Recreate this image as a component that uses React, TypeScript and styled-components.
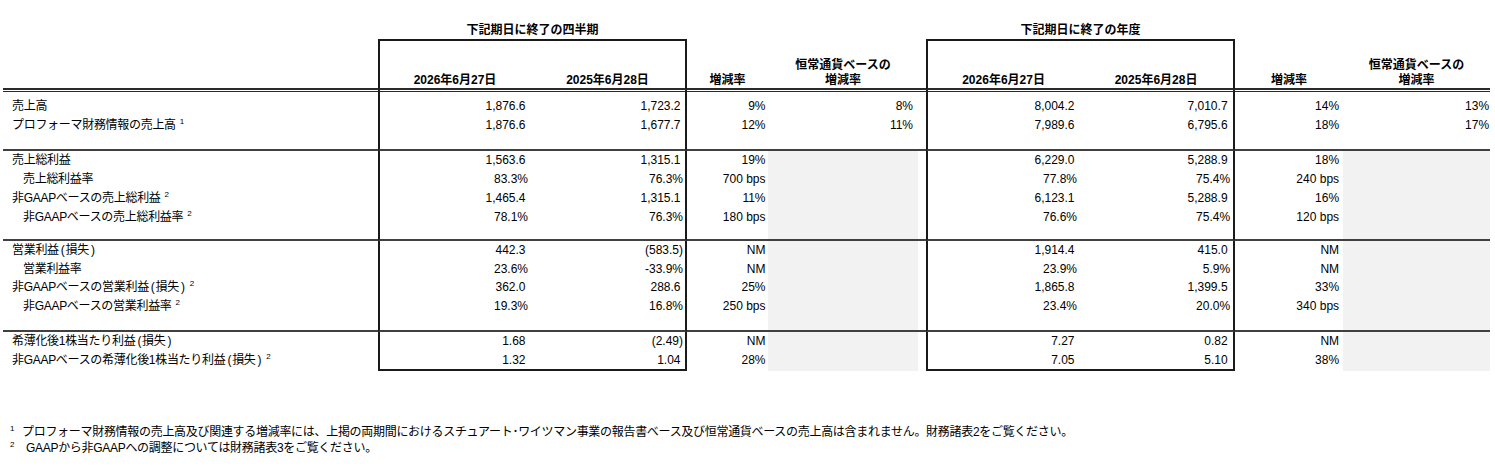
import React from 'react'
import styled, { createGlobalStyle, css } from 'styled-components'

type ColKey = 'label' | 'q1' | 'q2' | 'chg' | 'cc' | 'gap' | 'y1' | 'y2' | 'chg2' | 'cc2'
type Edge = 'none' | 'head' | 'thin' | 'rule' | 'box'

interface IRow {
  label: string
  loss?: boolean
  sup?: string
  indent?: boolean
  values: string[]
}

const COLS: { key: ColKey; width: number; pr: number }[] = [
  { key: 'label', width: 375, pr: 0 },
  { key: 'q1', width: 152, pr: 2 },
  { key: 'q2', width: 157, pr: 2 },
  { key: 'chg', width: 81, pr: 2.5 },
  { key: 'cc', width: 150, pr: 5 },
  { key: 'gap', width: 8, pr: 0 },
  { key: 'y1', width: 153, pr: 2 },
  { key: 'y2', width: 156, pr: 3 },
  { key: 'chg2', width: 108, pr: 4 },
  { key: 'cc2', width: 147, pr: 1 },
]

const BOX_LEFT: ColKey[] = ['q1', 'y1']
const BOX_RIGHT: ColKey[] = ['q2', 'y2']
const BOX: ColKey[] = ['q1', 'q2', 'y1', 'y2']
const SHADED: ColKey[] = ['cc', 'cc2']

const SECTIONS: IRow[][] = [
  [
    { label: '売上高', values: ['1,876.6', '1,723.2', '9%', '8%', '8,004.2', '7,010.7', '14%', '13%'] },
    {
      label: 'プロフォーマ財務情報の売上高',
      sup: '1',
      values: ['1,876.6', '1,677.7', '12%', '11%', '7,989.6', '6,795.6', '18%', '17%'],
    },
  ],
  [
    { label: '売上総利益', values: ['1,563.6', '1,315.1', '19%', '', '6,229.0', '5,288.9', '18%', ''] },
    { label: '売上総利益率', indent: true, values: ['83.3%', '76.3%', '700 bps', '', '77.8%', '75.4%', '240 bps', ''] },
    {
      label: '非GAAPベースの売上総利益',
      sup: '2',
      values: ['1,465.4', '1,315.1', '11%', '', '6,123.1', '5,288.9', '16%', ''],
    },
    {
      label: '非GAAPベースの売上総利益率',
      sup: '2',
      indent: true,
      values: ['78.1%', '76.3%', '180 bps', '', '76.6%', '75.4%', '120 bps', ''],
    },
  ],
  [
    { label: '営業利益', loss: true, values: ['442.3', '(583.5)', 'NM', '', '1,914.4', '415.0', 'NM', ''] },
    { label: '営業利益率', indent: true, values: ['23.6%', '-33.9%', 'NM', '', '23.9%', '5.9%', 'NM', ''] },
    {
      label: '非GAAPベースの営業利益',
      loss: true,
      sup: '2',
      values: ['362.0', '288.6', '25%', '', '1,865.8', '1,399.5', '33%', ''],
    },
    {
      label: '非GAAPベースの営業利益率',
      sup: '2',
      indent: true,
      values: ['19.3%', '16.8%', '250 bps', '', '23.4%', '20.0%', '340 bps', ''],
    },
  ],
  [
    { label: '希薄化後1株当たり利益', loss: true, values: ['1.68', '(2.49)', 'NM', '', '7.27', '0.82', 'NM', ''] },
    {
      label: '非GAAPベースの希薄化後1株当たり利益',
      loss: true,
      sup: '2',
      values: ['1.32', '1.04', '28%', '', '7.05', '5.10', '38%', ''],
    },
  ],
]

// spacer above each section: height and whether it ends with a separator line
const GAPS = [
  { h: 5, rule: false, shade: false },
  { h: 16.5, rule: true, shade: false },
  { h: 14.5, rule: true, shade: true },
  { h: 16.25, rule: true, shade: true },
]

const HEADERS: Record<ColKey, React.ReactNode> = {
  label: '',
  q1: '2026年6月27日',
  q2: '2025年6月28日',
  chg: '増減率',
  cc: (
    <>
      恒常通貨ベースの
      <br />
      増減率
    </>
  ),
  gap: '',
  y1: '2026年6月27日',
  y2: '2025年6月28日',
  chg2: '増減率',
  cc2: (
    <>
      恒常通貨ベースの
      <br />
      増減率
    </>
  ),
}

const App = () => {
  const cells = (opts: {
    top?: Edge
    bottom?: Edge
    shade?: boolean
    content?: (col: ColKey) => React.ReactNode
    head?: boolean
  }) =>
    COLS.map((c) => (
      <Cell
        key={c.key}
        $col={c.key}
        $pr={opts.head ? 0 : c.pr}
        $top={opts.top || 'none'}
        $bottom={opts.bottom || 'none'}
        $shade={!!opts.shade && SHADED.includes(c.key)}
        $head={!!opts.head}
      >
        {opts.content ? opts.content(c.key) : null}
      </Cell>
    ))

  return (
    <>
      <GlobalStyle />
      <Page>
        <Table>
          <colgroup>
            {COLS.map((c) => (
              <col key={c.key} style={{ width: c.width }} />
            ))}
          </colgroup>
          <tbody>
            <Row $h={39}>
              <td colSpan={1} />
              <GroupTitle colSpan={2}>下記期日に終了の四半期</GroupTitle>
              <td colSpan={3} />
              <GroupTitle colSpan={2}>下記期日に終了の年度</GroupTitle>
              <td colSpan={2} />
            </Row>
            <Row $h={51}>{cells({ top: 'box', bottom: 'head', head: true, content: (k) => HEADERS[k] })}</Row>
            <Row $h={2}>{cells({ bottom: 'thin' })}</Row>

            {SECTIONS.map((section, si) => (
              <React.Fragment key={si}>
                <Row $h={GAPS[si].h}>
                  {cells({ bottom: GAPS[si].rule ? 'rule' : 'none', shade: GAPS[si].shade })}
                </Row>
                {section.map((row, ri) => {
                  const last = si === SECTIONS.length - 1 && ri === section.length - 1
                  return (
                    <Row key={ri} $h={last ? 20.75 : 18.75}>
                      {cells({
                        shade: si > 0,
                        bottom: last ? 'box' : 'none',
                        content: (k) => {
                          if (k === 'label') {
                            return (
                              <Label $indent={!!row.indent}>
                                {row.label}
                                {row.loss ? (
                                  <>
                                    <Paren>(</Paren>損失<Paren>)</Paren>
                                  </>
                                ) : null}
                                {row.sup ? <Sup>{row.sup}</Sup> : null}
                              </Label>
                            )
                          }
                          if (k === 'gap') return null
                          const idx = COLS.findIndex((c) => c.key === k) - 1
                          const v = row.values[idx > 4 ? idx - 1 : idx]
                          return <Val $trail={/\d$/.test(v)}>{v}</Val>
                        },
                      })}
                    </Row>
                  )
                })}
              </React.Fragment>
            ))}
          </tbody>
        </Table>

        <Notes>
          <Note>
            <Mark>1</Mark>
            <span>
              プロフォーマ財務情報の売上高及び関連する増減率には、上掲の両期間におけるスチュアート･ワイツマン事業の報告書ベース及び恒常通貨ベースの売上高は含まれません。財務諸表2をご覧ください。
            </span>
          </Note>
          <Note>
            <Mark>2</Mark>
            <NoteText $lead={4}>GAAPから非GAAPへの調整については財務諸表3をご覧ください。</NoteText>
          </Note>
        </Notes>
      </Page>
    </>
  )
}

export default App

const GlobalStyle = createGlobalStyle`
  html, body {
    margin: 0;
    padding: 0;
    background: #ffffff;
  }

  body {
    font-family: 'Liberation Sans', 'Noto Sans CJK JP', sans-serif;
    font-size: 12px;
    color: #000000;
  }
`

const Page = styled.div`
  width: 1487px;
  padding-left: 3px;
`

const Table = styled.table`
  table-layout: fixed;
  width: 1487px;
  border-collapse: separate;
  border-spacing: 0;
  font-size: 12px;
`

const Row = styled.tr<{ $h: number }>`
  height: ${(p) => p.$h}px;
`

const GroupTitle = styled.td`
  padding: 0 0 2px;
  vertical-align: bottom;
  text-align: center;
  font-weight: bold;
  line-height: 14px;
`

const edge = (e: Edge, col: ColKey) => {
  switch (e) {
    case 'head':
      return '2px solid #2a2a2a'
    case 'thin':
      return '1px solid #2a2a2a'
    case 'rule':
      return '2px solid #404040'
    case 'box':
      return BOX.includes(col) ? '2px solid #1a1a1a' : '2px solid transparent'
    default:
      return 'none'
  }
}

const Cell = styled.td<{
  $col: ColKey
  $pr: number
  $top: Edge
  $bottom: Edge
  $shade: boolean
  $head: boolean
}>`
  box-sizing: border-box;
  padding: 0 ${(p) => p.$pr}px 0 0;
  line-height: 14px;
  white-space: nowrap;
  vertical-align: middle;
  text-align: ${(p) => (p.$col === 'label' ? 'left' : 'right')};
  background: ${(p) => (p.$shade ? '#f2f2f2' : 'transparent')};
  border-top: ${(p) => edge(p.$top, p.$col)};
  border-bottom: ${(p) => edge(p.$bottom, p.$col)};
  border-left: ${(p) => (BOX_LEFT.includes(p.$col) ? '2px solid #1a1a1a' : 'none')};
  border-right: ${(p) => (BOX_RIGHT.includes(p.$col) ? '2px solid #1a1a1a' : 'none')};

  ${(p) =>
    p.$head &&
    css`
      vertical-align: bottom;
      text-align: center;
      font-weight: bold;
      line-height: 15px;
    `}
`

const Label = styled.span<{ $indent: boolean }>`
  display: inline-block;
  padding-left: ${(p) => (p.$indent ? 20 : 9)}px;
  letter-spacing: -0.3px;
`

const Paren = styled.span`
  margin: 0 1px 0 2px;
`

const Sup = styled.sup`
  font-size: 8px;
  line-height: 0;
  vertical-align: 5px;
  margin-left: 4px;
`

const Val = styled.span<{ $trail: boolean }>`
  padding-right: ${(p) => (p.$trail ? 2.5 : 0)}px;
`

const Notes = styled.div`
  margin-top: 53px;
  padding-left: 7px;
`

const Note = styled.div`
  display: flex;
  align-items: flex-start;
  line-height: 16px;
  letter-spacing: -0.3px;
  white-space: pre;
`

const NoteText = styled.span<{ $lead: number }>`
  padding-left: ${(p) => p.$lead}px;
`

const Mark = styled.span`
  width: 12px;
  font-size: 8px;
  line-height: 10px;
`
